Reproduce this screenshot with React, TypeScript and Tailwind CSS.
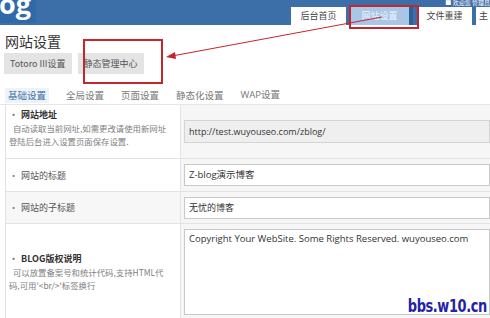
import React from "react";

const cjk = "font-['Noto_Sans_CJK_SC','Noto_Sans',sans-serif]";
const latin = "font-['Open_Sans','Noto_Sans_CJK_SC',sans-serif]";

function HeaderTab({ label, active = false }: { label: string; active?: boolean }) {
  return (
    <div
      className={
        active
          ? "flex h-[18px] w-[63px] items-center justify-center border-r-4 border-[#2d5f98] bg-[#a9c5e8] text-[9px] text-[#eef4fb]"
          : "flex h-[18px] w-[55px] items-center justify-center bg-white text-[9px] text-[#444]"
      }
    >
      {label}
    </div>
  );
}

function Row({
  label,
  desc,
  bold = false,
  gray = false,
  height,
  top = false,
  children,
}: {
  label: string;
  desc?: string[];
  bold?: boolean;
  gray?: boolean;
  height: string;
  top?: boolean;
  children: React.ReactNode;
}) {
  return (
    <div className={`flex border-b border-[#e3e3e3] ${height} ${gray ? "bg-[#f7f7f7]" : "bg-white"}`}>
      <div
        className={`flex w-[175px] flex-col border-r border-[#e3e3e3] pl-[3px] pr-1 ${top ? "justify-start pt-[3px]" : "justify-center"}`}
      >
        <div className={`text-[9px] leading-[13px] ${bold ? "font-bold text-[#333]" : "text-[#555]"}`}>
          <span className="mr-[3px] text-[#777]">•</span>
          {label}
        </div>
        {desc && (
          <div className="mt-[1px] text-[8.4px] leading-[13px] text-[#808080]">
            {desc.map((d, i) => (
              <div key={i} className={i === 0 ? "pl-[4px]" : ""}>
                {d}
              </div>
            ))}
          </div>
        )}
      </div>
      <div className="flex flex-1 flex-col justify-center bg-[#f6f6f6] pl-[3px]">{children}</div>
    </div>
  );
}

export default function App() {
  return (
    <div className={`relative h-[318px] w-[490px] overflow-hidden bg-white ${cjk}`}>
      {/* header */}
      <div className="flex h-[25px] items-end justify-between bg-[#3c6ea7]">
        <div className="relative h-[23px] w-[36px] self-start overflow-hidden bg-[#2f6aa8]">
          <span className={`absolute -left-[1px] -top-[11px] text-[27px] font-bold leading-[30px] text-white ${latin}`}>og</span>
        </div>
        <div className="relative flex items-end gap-[4px]">
          <div className="absolute -top-[7px] right-0 text-[6px] leading-[6px] text-white">■ 欢迎您 管理员</div>
          <HeaderTab label="后台首页" />
          <HeaderTab label="网站设置" active />
          <HeaderTab label="文件重建" />
          <div className="flex h-[18px] w-[14px] items-center bg-white pl-[3px] text-[9px] text-[#444]">主</div>
        </div>
      </div>

      {/* title */}
      <div className="pl-[5px] pt-[6px] text-[14px] leading-[20px] text-[#333]">网站设置</div>
      <div className="mt-[2px] flex gap-[6px] pl-[4px]">
        <div className="flex h-[21px] items-center bg-[#e4e4e4] px-[6px] text-[9px] text-[#555]">Totoro III设置</div>
        <div className="flex h-[21px] items-center bg-[#e4e4e4] px-[6px] text-[9px] text-[#555]">静态管理中心</div>
      </div>

      {/* tabs */}
      <div className="mt-[13px] flex h-[18px] items-center gap-[17px] border-b border-[#e6e6e6] pl-[5px] text-[9.5px] text-[#777]">
        <span className="bg-[#eef3f9] px-[3px] text-[#3d6fa8]">基础设置</span>
        <span>全局设置</span>
        <span>页面设置</span>
        <span>静态化设置</span>
        <span className={latin}>WAP设置</span>
      </div>

      {/* table */}
      <div className="ml-[5px] border-l border-[#e3e3e3]">
        <Row
          label="网站地址"
          bold
          top
          height="h-[54px]"
          desc={["自动读取当前网址,如需更改请使用新网址", "登陆后台进入设置页面保存设置."]}
        >
          <div className={`flex h-[23px] items-center border border-[#d4d4d4] bg-[#efefef] pl-[4px] text-[9px] text-[#333] ${latin}`}>
            http://test.wuyouseo.com/zblog/
          </div>
        </Row>
        <Row label="网站的标题" height="h-[33px]">
          <div className={`flex h-[22px] items-center border border-[#c9c9c9] bg-white pl-[4px] text-[9.5px] text-[#333] ${latin}`}>
            Z-blog演示博客
          </div>
        </Row>
        <Row label="网站的子标题" gray height="h-[32px]">
          <div className="flex h-[22px] items-center border border-[#c9c9c9] bg-white pl-[4px] text-[9px] text-[#333]">
            无忧的博客
          </div>
        </Row>
        <Row
          label="BLOG版权说明"
          bold
          height="h-[96px]"
          desc={["可以放置备案号和统计代码,支持HTML代", "码,可用'<br/>'标签换行"]}
        >
          <div className={`h-[86px] border border-[#c9c9c9] bg-white pl-[4px] pt-[2px] text-[9.5px] leading-[14px] text-[#333] ${latin}`}>
            Copyright Your WebSite. Some Rights Reserved. wuyouseo.com
          </div>
        </Row>
      </div>

      {/* annotations */}
      <div className="absolute left-[349px] top-[5px] h-[24px] w-[70px] border-2 border-[#c1272d]" />
      <div className="absolute left-[83px] top-[39px] h-[45px] w-[80px] border-2 border-[#c1272d]" />
      <svg className="absolute left-0 top-0" width="490" height="318" viewBox="0 0 490 318">
        <line x1="382" y1="17" x2="172" y2="56" stroke="#c1272d" strokeWidth="1" />
        <polygon points="166,57 175,52 176,59" fill="#c1272d" />
      </svg>

      {/* watermark */}
      <div className="absolute right-[3px] top-[296px] origin-right scale-x-[0.8] font-['DejaVu_Sans_Condensed','DejaVu_Sans',sans-serif] text-[18px] font-bold leading-[20px] tracking-[-0.5px] text-[#2222a8]">
        bbs.w10.cn
      </div>
    </div>
  );
}
